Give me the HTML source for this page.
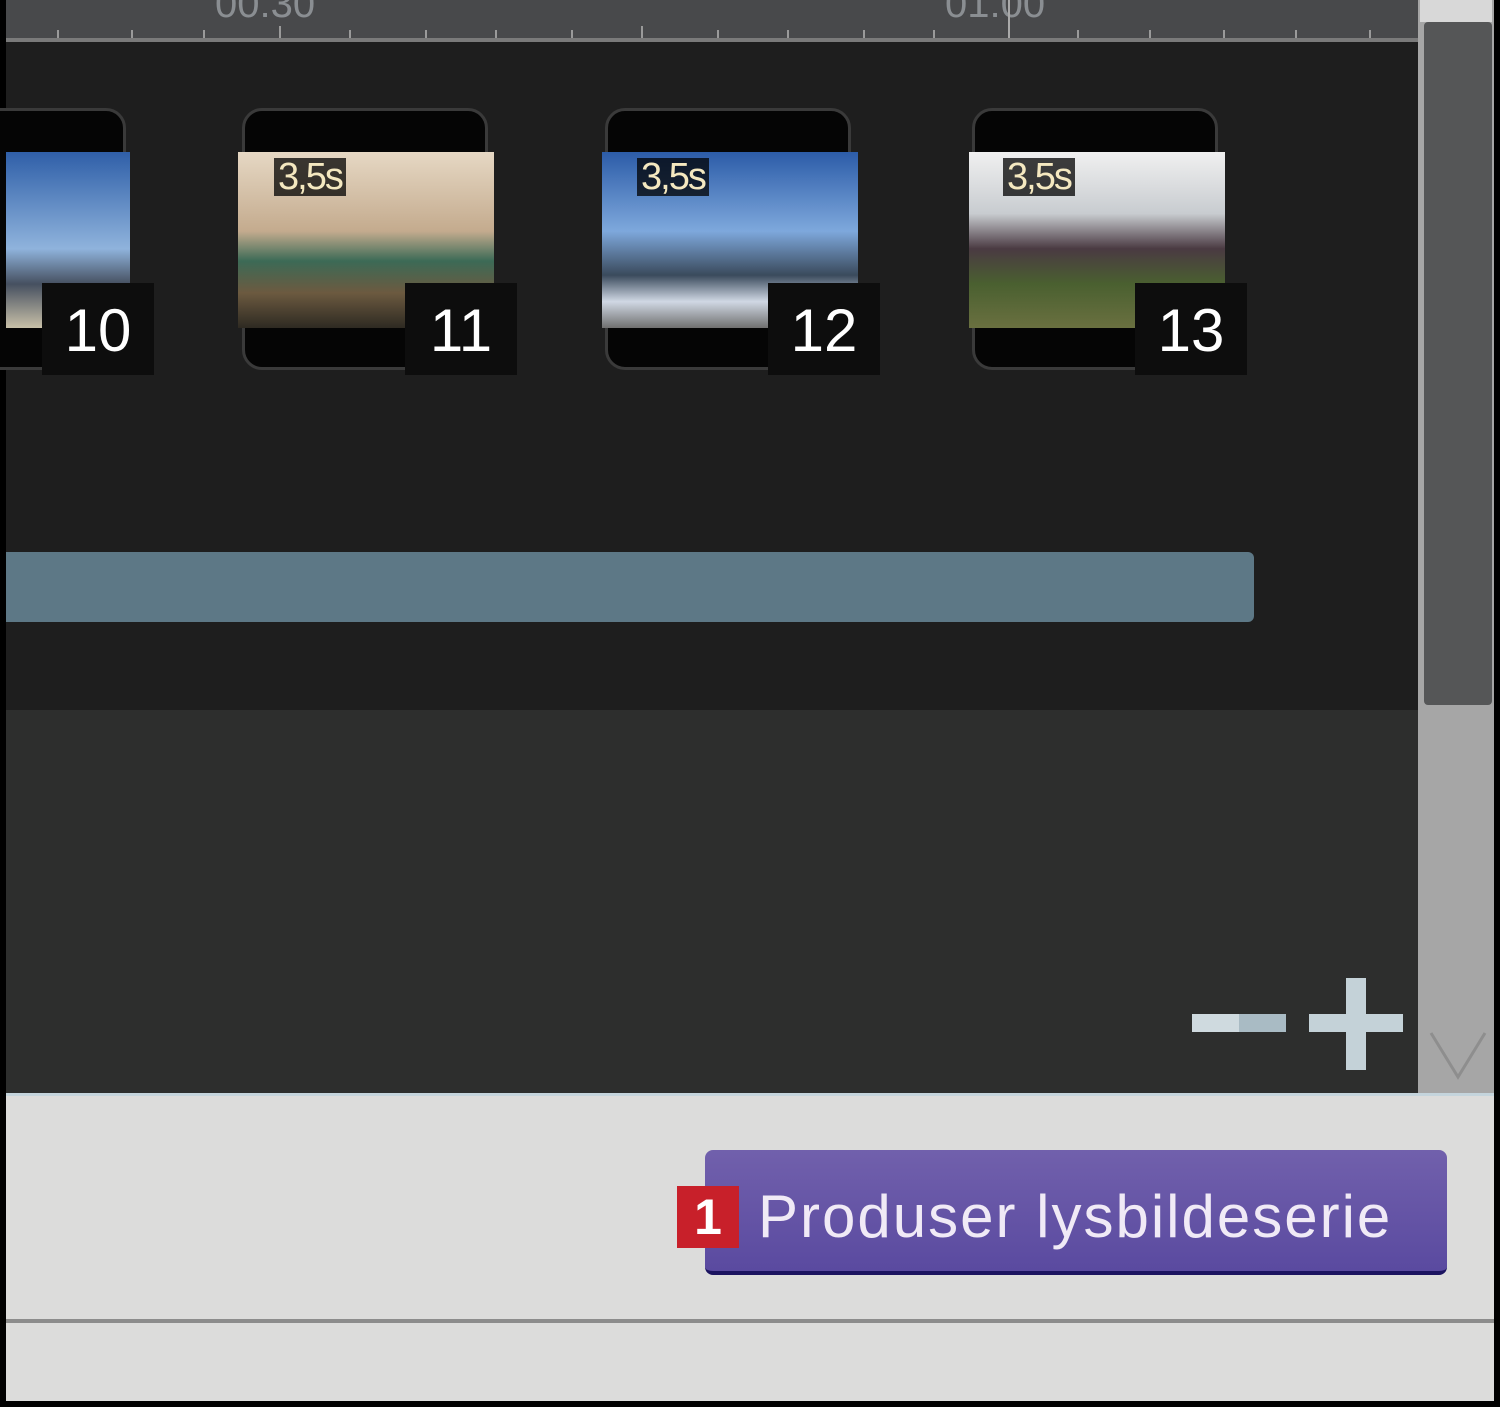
<!DOCTYPE html>
<html><head><style>
body{margin:0;width:1500px;height:1407px;position:relative;background:#000;overflow:hidden;font-family:"Liberation Sans",sans-serif}
.a{position:absolute}
.fr{position:absolute;top:108px;width:246px;height:262px;border:3px solid #3a3a3a;border-radius:20px;background:#050505;box-sizing:border-box}
.img{position:absolute;top:152px;height:176px}
.dur{position:absolute;top:158px;font-size:38px;color:#f4e8c0;background:rgba(0,0,0,.75);padding:0 4px;line-height:38px;letter-spacing:-2px}
.num{position:absolute;top:283px;height:92px;width:112px;background:#0d0d0d;color:#fff;font-size:60px;line-height:96px;text-align:center}
</style></head><body>
<div class="a" style="left:6px;top:0;width:1412px;height:38px;background:#48494b"></div>
<div class="a" style="left:215px;top:-18px;font-size:40px;color:#8a8e92">00:30</div>
<div class="a" style="left:945px;top:-18px;font-size:40px;color:#8a8e92">01:00</div>
<div class="a" style="left:1008px;top:0;width:2px;height:38px;background:#aaa"></div>
<svg class="a" style="left:6px;top:26px" width="1412" height="12"><g stroke="#9a9a9a" stroke-width="2">
<line x1="52" y1="4" x2="52" y2="12"/><line x1="126" y1="4" x2="126" y2="12"/><line x1="198" y1="4" x2="198" y2="12"/><line x1="274" y1="0" x2="274" y2="12"/><line x1="344" y1="4" x2="344" y2="12"/><line x1="420" y1="4" x2="420" y2="12"/><line x1="490" y1="4" x2="490" y2="12"/><line x1="566" y1="4" x2="566" y2="12"/><line x1="636" y1="0" x2="636" y2="12"/><line x1="712" y1="4" x2="712" y2="12"/><line x1="782" y1="4" x2="782" y2="12"/><line x1="858" y1="4" x2="858" y2="12"/><line x1="928" y1="4" x2="928" y2="12"/><line x1="1072" y1="4" x2="1072" y2="12"/><line x1="1144" y1="4" x2="1144" y2="12"/><line x1="1218" y1="4" x2="1218" y2="12"/><line x1="1290" y1="4" x2="1290" y2="12"/><line x1="1364" y1="4" x2="1364" y2="12"/></g></svg>
<div class="a" style="left:6px;top:38px;width:1412px;height:4px;background:#7a7a7a"></div>
<div class="a" style="left:6px;top:42px;width:1412px;height:668px;background:#1e1e1e"></div>
<div class="a" style="left:6px;top:710px;width:1412px;height:383px;background:#2d2e2d"></div>
<div class="a" style="left:1418px;top:0;width:76px;height:1093px;background:#a6a6a6"></div>
<div class="a" style="left:1420px;top:0;width:72px;height:22px;background:#d8d8d8"></div>
<div class="a" style="left:1424px;top:22px;width:68px;height:683px;background:#555657;border-radius:4px"></div>
<svg class="a" style="left:1425px;top:1025px" width="66" height="60"><polyline points="6,8 33,52 60,8" fill="none" stroke="#8e8e8e" stroke-width="3"/></svg>

<div class="fr" style="left:-120px"></div>
<div class="img" style="left:6px;width:124px;background:linear-gradient(#2f5fa8,#8fb3dc 55%,#465060 75%,#c8c0a8)"></div>
<div class="num" style="left:42px">10</div>

<div class="fr" style="left:242px"></div>
<div class="img" style="left:238px;width:256px;background:linear-gradient(#e6d8c4,#c4ab8e 45%,#3c6a56 62%,#6c5a40 80%,#2e2a22)"></div>
<div class="dur" style="left:274px">3,5s</div>
<div class="num" style="left:405px">11</div>

<div class="fr" style="left:605px"></div>
<div class="img" style="left:602px;width:256px;background:linear-gradient(#2c5ca8,#7ea8dc 45%,#3a4a5c 70%,#d0d8e4 85%,#707070)"></div>
<div class="dur" style="left:637px">3,5s</div>
<div class="num" style="left:768px">12</div>

<div class="fr" style="left:972px"></div>
<div class="img" style="left:969px;width:256px;background:linear-gradient(#f0f0f0,#c8ccd0 35%,#4a3a42 55%,#4a6030 75%,#6a7040)"></div>
<div class="dur" style="left:1003px">3,5s</div>
<div class="num" style="left:1135px">13</div>

<div class="a" style="left:6px;top:552px;width:1248px;height:70px;background:#5d7886;border-radius:0 6px 6px 0"></div>

<div class="a" style="left:1192px;top:1014px;width:94px;height:18px;background:linear-gradient(90deg,#cfdadf 50%,#a9bbc4 50%)"></div>
<div class="a" style="left:1309px;top:1014px;width:94px;height:18px;background:#c4d2d8"></div>
<div class="a" style="left:1346px;top:978px;width:20px;height:92px;background:#c4d2d8"></div>

<div class="a" style="left:6px;top:1093px;width:1488px;height:308px;background:#dcdcdb"></div>
<div class="a" style="left:6px;top:1093px;width:1488px;height:3px;background:#c4d4dc"></div>
<div class="a" style="left:6px;top:1319px;width:1488px;height:4px;background:#8c8c8c"></div>
<div class="a" style="left:705px;top:1150px;width:742px;height:125px;background:linear-gradient(#7160ac,#5a4aa0);border-radius:8px;border-bottom:4px solid #1c1460;box-sizing:border-box"></div>
<div class="a" style="left:758px;top:1182px;font-size:60px;letter-spacing:2px;color:#f0eaf6;line-height:70px">Produser lysbildeserie</div>
<div class="a" style="left:677px;top:1186px;width:62px;height:62px;background:#c8202a;color:#fff;font-size:50px;font-weight:bold;text-align:center;line-height:62px">1</div>
</body></html>
